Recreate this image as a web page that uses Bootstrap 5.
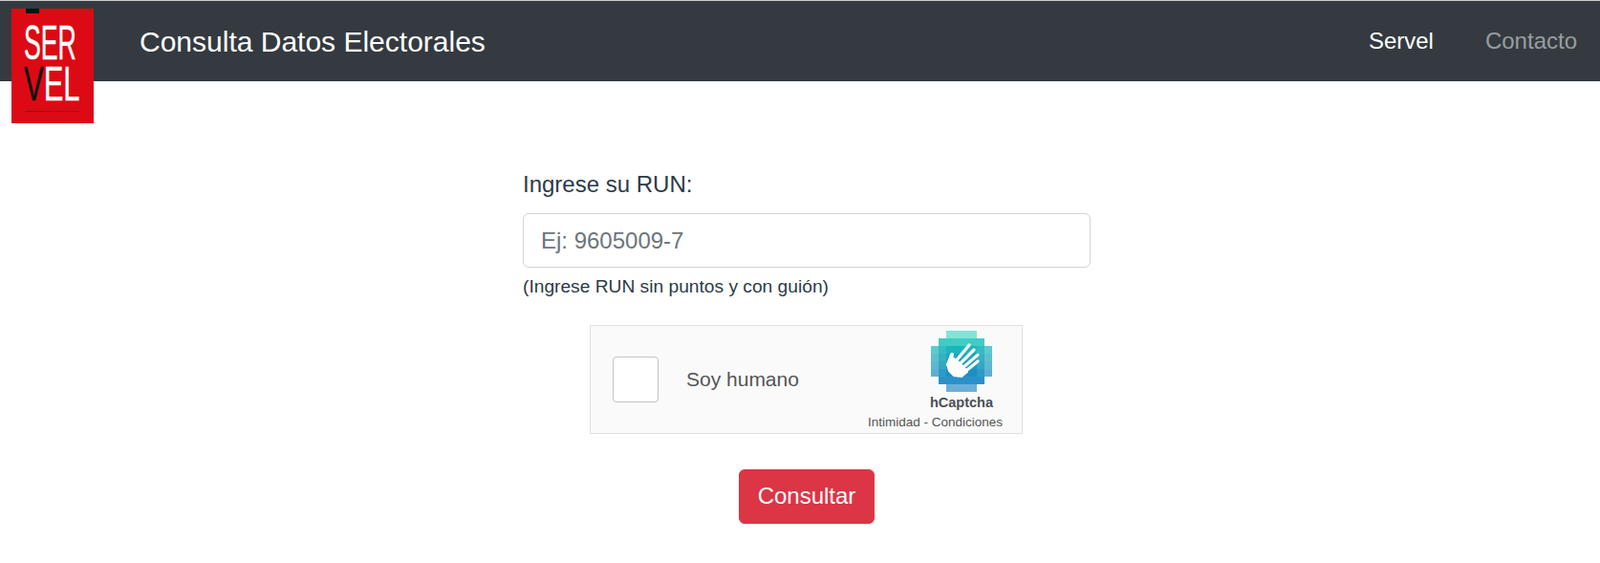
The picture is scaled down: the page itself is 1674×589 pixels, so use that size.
<!DOCTYPE html>
<html lang="es">
<head>
    <meta charset="UTF-8" />
    <title>Consulta Datos Electorales</title>
    <link href="https://cdn.jsdelivr.net/npm/bootstrap@5.3.0/dist/css/bootstrap.min.css" rel="stylesheet" />
    <script src="https://cdn.jsdelivr.net/npm/bootstrap@5.3.0/dist/js/bootstrap.bundle.min.js"></script>
    <style>
        body {
            font-family: "Liberation Sans", Arial, sans-serif;
            color: #2c3a47;
            background-color: #fff;
            border-top: 1px solid #ccc;
        }
        .barra {
            height: 84px;
            background-color: #343a40;
            padding: 0 24px 0 12px;
        }
        .logo-servel {
            width: 86px;
            height: 120px;
            margin-top: 8px;
            align-self: flex-start;
            position: relative;
            z-index: 2;
        }
        .titulo-barra {
            margin-left: 48px;
            font-size: 30px;
            color: #fff;
        }
        .barra .nav-link {
            font-size: 24px;
            padding: 0 0 0 54px;
            color: #fff;
        }
        .barra .nav-link.apagado {
            color: rgba(255,255,255,.5);
        }
        .formulario {
            width: 594px;
            margin: 90px auto 0 547px;
        }
        .formulario label {
            font-size: 24px;
            line-height: 36px;
            margin-bottom: 12px;
        }
        .formulario .form-control {
            height: 57px;
            font-size: 24px;
            padding: 0 18px;
            border-color: #ced4da;
            font-family: "Liberation Sans", Arial, sans-serif;
        }
        .formulario .form-control::placeholder {
            color: #6c757d;
        }
        .ayuda {
            font-size: 19.2px;
            margin-top: 6px;
        }
        .captcha {
            width: 453px;
            height: 114px;
            margin: 25px 0 0 70px;
            background-color: #fafafa;
            border: 1px solid #e0e0e0;
            position: relative;
            padding-left: 23px;
        }
        .caja-check {
            width: 48px;
            height: 48px;
            background-color: #fff;
            border: 1px solid #c4c4c4;
            border-radius: 4px;
        }
        .texto-captcha {
            margin-left: 29px;
            font-size: 21px;
            color: #555;
        }
        .marca-captcha {
            position: absolute;
            top: 5px;
            left: 353px;
            width: 70px;
            text-align: center;
        }
        .marca-captcha svg {
            display: block;
            margin: 0 auto;
        }
        .nombre-captcha {
            font-size: 14.5px;
            font-weight: bold;
            color: #4a4f57;
            line-height: 18px;
            margin-top: 2px;
        }
        .legal-captcha {
            position: absolute;
            right: 20px;
            bottom: 3px;
            font-size: 13.5px;
            color: #555;
            line-height: 16px;
            white-space: nowrap;
        }
        .btn-consultar {
            font-size: 24px;
            width: 142px;
            height: 57px;
            padding: 0;
            background-color: #dc3545;
            border-color: #dc3545;
        }
        .fila-boton {
            margin-top: 37px;
        }
    </style>
</head>
<body>
<nav class="barra d-flex align-items-center">
    <svg class="logo-servel" viewBox="0 0 86 120" role="img" aria-label="Servel">
        <rect width="86" height="120" fill="#dc0a14"/>
        <rect x="15" y="0" width="14" height="5" fill="#111"/>
        <text transform="translate(13 53) scale(.534 1)" font-family="Liberation Sans" font-size="50" fill="#fff" stroke="#fff" stroke-width=".4">SER</text>
        <text transform="translate(13 96) scale(.62 1)" font-family="Liberation Sans" font-size="50" fill="#fff" stroke="#fff" stroke-width=".4"><tspan fill="#111" stroke="#111">V</tspan>EL</text>
        <rect x="14" y="107" width="57" height="1" fill="#7a1a1a"/>
    </svg>
    <span class="titulo-barra">Consulta Datos Electorales</span>
    <ul class="nav ms-auto">
        <li class="nav-item"><a class="nav-link" href="#">Servel</a></li>
        <li class="nav-item"><a class="nav-link apagado" href="#">Contacto</a></li>
    </ul>
</nav>

<form class="formulario">
    <label for="run" class="form-label d-block">Ingrese su RUN:</label>
    <input id="run" type="text" class="form-control" placeholder="Ej: 9605009-7">
    <div class="ayuda">(Ingrese RUN sin puntos y con guión)</div>

    <div class="captcha d-flex align-items-center">
        <div class="caja-check"></div>
        <span class="texto-captcha">Soy humano</span>
        <div class="marca-captcha">
            <svg id="pixeles" width="64" height="64" viewBox="0 0 64 64"></svg>
            <div class="nombre-captcha">hCaptcha</div>
        </div>
        <div class="legal-captcha">Intimidad - Condiciones</div>
    </div>

    <div class="text-center fila-boton">
        <button type="button" class="btn btn-danger btn-consultar">Consultar</button>
    </div>
</form>

<script>
    // logo hCaptcha: cuadricula de 8x8, verde arriba y azul abajo
    var filas = ['00111100','01111110','11111111','11111111','11111111','11111111','01111110','00111100'];
    var colores = ['#4fdcc9','#2cc6c0','#1db5bb','#1fa8bb','#1f9dbf','#1a90c2','#1585c4','#2f8fcb'];
    var svg = document.getElementById('pixeles');
    var html = '<defs><filter id="suave"><feGaussianBlur stdDeviation=".5"/></filter></defs><g filter="url(#suave)">';
    filas.forEach(function (f, y) {
        for (var x = 0; x < 8; x++) {
            if (f[x] === '1') {
                // los bordes son mas claros
                var d = Math.max(Math.abs(x - 3.5), Math.abs(y - 3.5));
                var op = d > 3 ? 0.7 : d > 2 ? 0.9 : 1;
                html += '<rect x="' + x * 8 + '" y="' + y * 8 + '" width="8" height="8" fill="' + colores[y] + '" opacity="' + op + '"/>';
            }
        }
    });
    html += '</g>';
    // mano
    html += '<g stroke="#fff" stroke-linecap="round" stroke-linejoin="round" fill="#fff">' +
        '<path stroke-width="2" d="M17 35L21 27L27 31L36 40L38 43L32 48L24 47L19 42Z"/>' +
        '<path stroke-width="4" d="M18.5 35L22 25"/>' +
        '<path stroke-width="3.2" fill="none" d="M26.7 31L40 15M30 35L45 20M33.5 38.5L49 25.3M36.7 42L49 32"/>' +
        '</g>';
    svg.innerHTML = html;
</script>
</body>
</html>
